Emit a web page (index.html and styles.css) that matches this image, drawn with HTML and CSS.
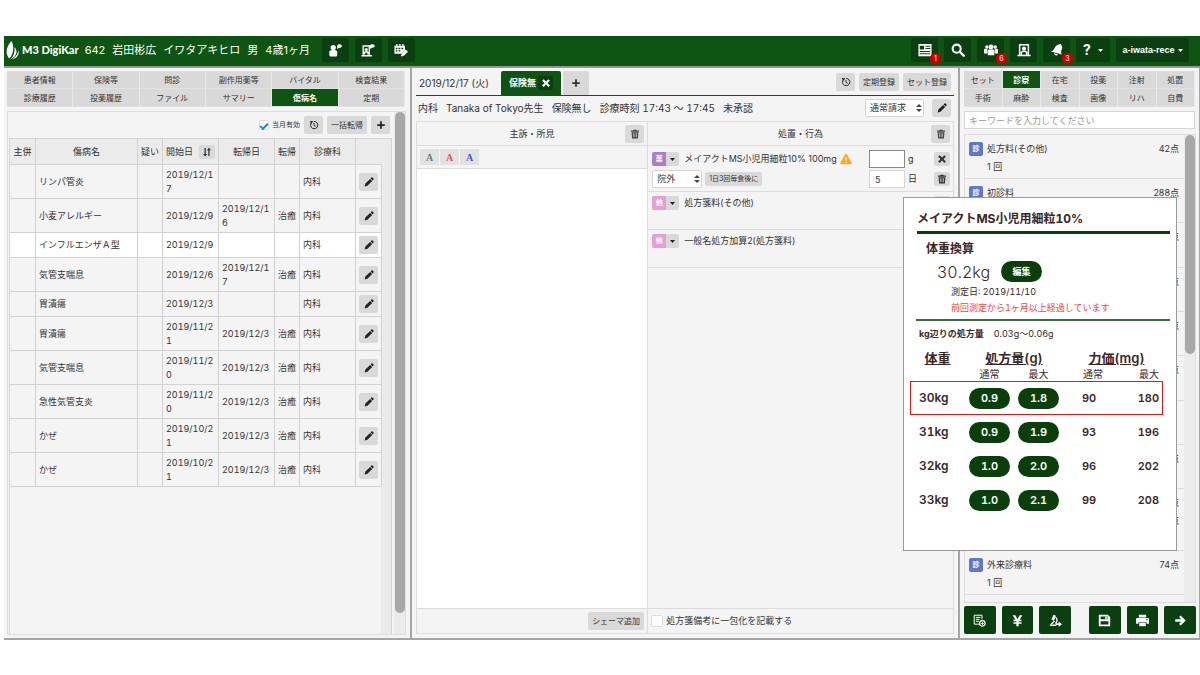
FILE: index.html
```html
<!DOCTYPE html>
<html lang="ja">
<head>
    <meta charset="UTF-8">
    <meta name="viewport" content="width=device-width, initial-scale=1.0">
    <title>M3 DigiKar</title>
    <link rel="stylesheet" href="styles.css">
</head>
<body>
    <svg class="sprite" aria-hidden="true">
        <symbol id="i-pencil" viewBox="0 0 16 16"><path d="M12 .8c.5-.5 1.200-.5 1.700 0l1.500 1.500c.5.5.5 1.200 0 1.700l-1.400 1.400-3.200-3.200zM9.800 3l3.200 3.200-7.500 7.700L1 15l1.200-4.500z"/></symbol>
        <symbol id="i-trash" viewBox="0 0 16 16"><path d="M6 1h4l1 1.5h3.5v2h-13v-2H5z"/><path fill-rule="evenodd" d="M2.5 5.2h11l-.9 9.8H3.4zM5 6.8l.4 6.4h1l-.2-6.4zm2.5 0v6.4h1V6.8zm2.4 0l-.3 6.4h1l.4-6.4z"/></symbol>
        <symbol id="i-plus" viewBox="0 0 16 16"><path d="M6.6 2h2.8v4.6H14v2.8H9.4V14H6.6V9.4H2V6.6h4.6z"/></symbol>
        <symbol id="i-cross" viewBox="0 0 16 16"><path d="M4.2 1.8L8 5.6l3.8-3.8 2.4 2.4L10.4 8l3.8 3.8-2.4 2.4L8 10.4l-3.8 3.8-2.4-2.4L5.6 8 1.8 4.2z"/></symbol>
        <symbol id="i-history" viewBox="0 0 16 16"><path d="M4 4.2A5.8 5.8 0 1 0 8.3 2.3M8 5v3.5l2.6 1.6" fill="none" stroke="currentColor" stroke-width="1.6"/><path d="M1.2 1.6l5.6.3-2.9 4.6z"/></symbol>
        <symbol id="i-sort" viewBox="0 0 16 16"><path d="M4 1.5h2V11h2.4L5 15 1.6 11H4zM10 14.5h2V5h2.4L11 1 7.8 5H10z"/></symbol>
        <symbol id="i-caret" viewBox="0 0 10 6"><path d="M0 0h10L5 6z"/></symbol>
        <symbol id="i-warn" viewBox="0 0 16 16"><path fill-rule="evenodd" d="M8 1c.5 0 .9.3 1.1.7l6.500 11.600c.4.8-.1 1.700-1 1.700H1.400c-.9 0-1.400-.9-1-1.700L6.900 1.700C7.100 1.300 7.500 1 8 1zM7 5.500l.3 4.700h1.400L9 5.500zm.1 5.800v1.800h1.800v-1.800z"/></symbol>
        <symbol id="i-patient" viewBox="0 0 16 16"><circle cx="6" cy="5.200" r="3"/><path d="M1.500 9.500C2.500 8.300 4 8 6 8s3.500.3 4.500 1.500v4.200c0 1-.7 1.800-1.800 1.800H3.300c-1.100 0-1.800-.8-1.800-1.800z"/><path d="M10.500 4.800c-.9-1.700.3-3.500 2.600-3.500 1.700 0 2.700.9 2.700 2s-1 2.100-2.800 2.100l-2.800 1.400z"/></symbol>
        <symbol id="i-reception" viewBox="0 0 16 16"><path d="M2.500 13.500v-10h7v10M.5 14.500h12M4 13v-2c1-1.300 3-1.300 4 0v2" fill="none" stroke="currentColor" stroke-width="1.600"/><circle cx="6" cy="7.500" r="1.800"/><path d="M10 4.800c-.9-1.700.5-3.500 2.800-3.500 1.700 0 2.900.9 2.900 2s-1.200 2-2.900 2L10.500 6.500z"/></symbol>
        <symbol id="i-calendar" viewBox="0 0 16 16"><path fill-rule="evenodd" d="M.5 3h2V1h1.500v2h2V1h1.500v2h2V1H11v2h1.500v5l-4 4.200H.5zM2 5.500V7h2V5.500zm3.200 0V7h2V5.500zm3.300 0V7h2V5.500zM2 8.300v1.500h2V8.300zm3.200 0v1.500h2V8.300z"/><path d="M13.200 7.500L16 10l-4.700 4.700-3.300.6.7-3.200z"/></symbol>
        <symbol id="i-news" viewBox="0 0 16 16"><path fill-rule="evenodd" d="M.5 1h15v14H.5zM2 3v4.500h5V3zm6.500 0v1.200h5.500V3zm0 2.600v1.200h5.500V5.600zM2 9.200v1.100h12V9.200zm0 2.600v1.100h12v-1.100z"/></symbol>
        <symbol id="i-search" viewBox="0 0 16 16"><circle cx="6.500" cy="6.500" r="4.600" fill="none" stroke="currentColor" stroke-width="2.400"/><path d="M10 10l4.500 4.500" stroke="currentColor" stroke-width="2.800" stroke-linecap="round"/></symbol>
        <symbol id="i-group" viewBox="0 0 16 16"><circle cx="3.300" cy="4.500" r="2"/><circle cx="12.700" cy="4.500" r="2"/><circle cx="8" cy="4.600" r="2.800"/><path d="M0 8c0-1 .7-1.500 1.500-1.500h2.300v5.500H0zM16 8c0-1-.7-1.500-1.500-1.500h-2.300v5.500H16zM4.300 9c0-1 .8-1.500 1.700-1.500h4c.9 0 1.700.5 1.700 1.500v5H4.300z"/></symbol>
        <symbol id="i-room" viewBox="0 0 16 16"><path d="M3 13.500V2h10v11.500M.5 14.200h15M5 13.500v-3c1.500-1.500 4.500-1.500 6 0v3" fill="none" stroke="currentColor" stroke-width="1.700"/><circle cx="8" cy="6.500" r="2.400"/></symbol>
        <symbol id="i-bell" viewBox="0 0 16 16"><path d="M11 1.500l1.600-.7.300 1.600c2 3 .6 5-.1 6.600-.4 1.300 0 2.300.7 4L.8 9.700c1.700-.7 2.900-1.200 3.800-2.700C6 4.700 7 2 11 1.500zM4.500 11.800l4.700 1.300c-.8 1.800-4.400 1.300-4.700-1.300z"/></symbol>
        <symbol id="i-note-add" viewBox="0 0 16 16"><path d="M8.500 12.500H1.500V1.500h9.500v5M3.500 4.200h5.500M3.500 6.600h4.500M3.500 9h3.500" fill="none" stroke="currentColor" stroke-width="1.200"/><circle cx="11.500" cy="11.500" r="3.400" fill="none" stroke="currentColor" stroke-width="1.400"/><path d="M9.500 11h4v1h-4zM11 9.500h1v4h-1z"/></symbol>
        <symbol id="i-yen" viewBox="0 0 16 16"><path d="M2 1.500h3.300L8 6.300l2.700-4.800H14L10.600 7H13v1.800H9.400v1.400H13V12H9.400v3H6.600v-3H3v-1.800h3.600V8.800H3V7h2.400z"/></symbol>
        <symbol id="i-scope" viewBox="0 0 16 16"><path d="M5.500.8l3 1.400-2.600 6-3-1.300zM1 13h8v1.800H1z"/><path d="M2.500 12.500L7 8.500M8 4c2.500 2 2.500 5 0 8" fill="none" stroke="currentColor" stroke-width="1.600"/><path d="M8.500 11.300H12V9.200l4 3.300-4 3.300v-2.300H8.500z"/></symbol>
        <symbol id="i-save" viewBox="0 0 16 16"><path fill-rule="evenodd" d="M1 1h11l3 3v11H1zM3.200 3v3.500h8.500V3zm0 6v4h9.600V9z"/><path d="M8.800 3.300h2v2.800h-2z"/></symbol>
        <symbol id="i-print" viewBox="0 0 16 16"><path fill-rule="evenodd" d="M3.500 1h9v3.200h-9zM1.500 5h13c.8 0 1.500.6 1.500 1.500V12h-3v-2H3v2H0V6.500C0 5.600.7 5 1.500 5zm11.300 1.300v1.300h1.500V6.300z"/><path d="M4 10.800h8V15H4z"/></symbol>
        <symbol id="i-arrow" viewBox="0 0 16 16"><path d="M8.200 1.800L14.500 8l-6.300 6.200-2-2 2.600-2.700H1.500v-3h7.300L6.200 3.800z"/></symbol>
    </svg>

    <div class="app">
        <header class="topbar">
            <a href="#" class="logo">
                <svg class="logo-mark" viewBox="0 0 14 19"><path d="M5.500 0c2.600 5 2.600 12-2 17.500C-.8 13.500-.3 6 5.500 0z"/><path d="M8.500 6c3.500 3.500 2.500 9.500-3.800 12.300C8 14.500 9 11 8.500 6z"/><path d="M12.300 9.500c1.500 3.500-1 7.500-6 9 3.500-2.500 5.300-5 6-9z"/></svg>
                <span>M3 DigiKar</span>
            </a>
            <h1 class="patient"><span>642</span><span>岩田彬広</span><span>イワタアキヒロ</span><span>男</span><span>4歳1ヶ月</span></h1>
            <button class="top-btn" aria-label="患者"><svg><use href="#i-patient"/></svg></button>
            <button class="top-btn" aria-label="受付"><svg><use href="#i-reception"/></svg></button>
            <button class="top-btn" aria-label="予約"><svg><use href="#i-calendar"/></svg></button>
            <nav class="top-right">
                <button class="top-btn" aria-label="お知らせ"><svg><use href="#i-news"/></svg><span class="count">1</span></button>
                <button class="top-btn" aria-label="検索"><svg><use href="#i-search"/></svg></button>
                <button class="top-btn" aria-label="グループ"><svg><use href="#i-group"/></svg><span class="count">6</span></button>
                <button class="top-btn" aria-label="診察室"><svg><use href="#i-room"/></svg></button>
                <button class="top-btn" aria-label="通知"><svg><use href="#i-bell"/></svg><span class="count">3</span></button>
                <button class="top-btn help">?<svg class="caret"><use href="#i-caret"/></svg></button>
                <button class="top-btn user">a-iwata-rece<svg class="caret"><use href="#i-caret"/></svg></button>
            </nav>
        </header>

        <main class="panels">
            <section class="panel left">
                <nav class="tabs">
                    <button>患者情報</button><button>保険等</button><button>問診</button><button>副作用薬等</button><button>バイタル</button><button>検査結果</button>
                    <button>診療履歴</button><button>投薬履歴</button><button>ファイル</button><button>サマリー</button><button class="active">傷病名</button><button>定期</button>
                </nav>
                <div class="scroll-box">
                    <div class="disease">
                        <div class="disease-tools">
                            <label class="check small"><input type="checkbox" checked>当月有効</label>
                            <button class="btn icon" aria-label="履歴"><svg><use href="#i-history"/></svg></button>
                            <button class="btn">一括転帰</button>
                            <button class="btn icon" aria-label="追加"><svg><use href="#i-plus"/></svg></button>
                        </div>
                        <div class="disease-list">
                            <div class="disease-body">
                                <table class="disease-table">
                                    <colgroup><col class="c-icon"><col class="c-name"><col class="c-flag"><col class="c-date"><col class="c-date"><col class="c-flag"><col class="c-date"><col class="c-icon"></colgroup>
                                    <thead>
                                        <tr><th>主併</th><th>傷病名</th><th>疑い</th><th><div class="sort">開始日<button class="btn" aria-label="並び替え"><svg><use href="#i-sort"/></svg></button></div></th><th>転帰日</th><th>転帰</th><th>診療科</th><th></th></tr>
                                    </thead>
                                    <tbody>
                                        <tr><td></td><td>リンパ管炎</td><td></td><td>2019/12/17</td><td></td><td></td><td>内科</td><td><button class="btn icon" aria-label="編集"><svg><use href="#i-pencil"/></svg></button></td></tr>
                                        <tr><td></td><td>小麦アレルギー</td><td></td><td>2019/12/9</td><td>2019/12/16</td><td>治癒</td><td>内科</td><td><button class="btn icon" aria-label="編集"><svg><use href="#i-pencil"/></svg></button></td></tr>
                                        <tr class="single current"><td></td><td>インフルエンザＡ型</td><td></td><td>2019/12/9</td><td></td><td></td><td>内科</td><td><button class="btn icon" aria-label="編集"><svg><use href="#i-pencil"/></svg></button></td></tr>
                                        <tr><td></td><td>気管支喘息</td><td></td><td>2019/12/6</td><td>2019/12/17</td><td>治癒</td><td>内科</td><td><button class="btn icon" aria-label="編集"><svg><use href="#i-pencil"/></svg></button></td></tr>
                                        <tr class="single"><td></td><td>胃潰瘍</td><td></td><td>2019/12/3</td><td></td><td></td><td>内科</td><td><button class="btn icon" aria-label="編集"><svg><use href="#i-pencil"/></svg></button></td></tr>
                                        <tr><td></td><td>胃潰瘍</td><td></td><td>2019/11/21</td><td>2019/12/3</td><td>治癒</td><td>内科</td><td><button class="btn icon" aria-label="編集"><svg><use href="#i-pencil"/></svg></button></td></tr>
                                        <tr><td></td><td>気管支喘息</td><td></td><td>2019/11/20</td><td>2019/12/3</td><td>治癒</td><td>内科</td><td><button class="btn icon" aria-label="編集"><svg><use href="#i-pencil"/></svg></button></td></tr>
                                        <tr><td></td><td>急性気管支炎</td><td></td><td>2019/11/20</td><td>2019/12/3</td><td>治癒</td><td>内科</td><td><button class="btn icon" aria-label="編集"><svg><use href="#i-pencil"/></svg></button></td></tr>
                                        <tr><td></td><td>かぜ</td><td></td><td>2019/10/21</td><td>2019/12/3</td><td>治癒</td><td>内科</td><td><button class="btn icon" aria-label="編集"><svg><use href="#i-pencil"/></svg></button></td></tr>
                                        <tr><td></td><td>かぜ</td><td></td><td>2019/10/21</td><td>2019/12/3</td><td>治癒</td><td>内科</td><td><button class="btn icon" aria-label="編集"><svg><use href="#i-pencil"/></svg></button></td></tr>
                                    </tbody>
                                </table>
                            </div>
                        </div>
                    </div>
                    <div class="scrollbar"><div class="thumb thumb-long"></div></div>
                </div>
            </section>

            <section class="panel mid">
                <div class="visit-tabs">
                    <span class="visit-date">2019/12/17 (火)</span>
                    <div class="visit-tab">保険無<button class="close" aria-label="閉じる"><svg><use href="#i-cross"/></svg></button></div>
                    <button class="visit-add" aria-label="追加"><svg><use href="#i-plus"/></svg></button>
                    <div class="visit-actions">
                        <button class="btn icon" aria-label="履歴"><svg><use href="#i-history"/></svg></button>
                        <button class="btn">定期登録</button>
                        <button class="btn">セット登録</button>
                    </div>
                </div>
                <div class="visit-info">
                    <span>内科</span><span>Tanaka of Tokyo先生</span><span>保険無し</span><span>診療時刻 17:43 〜 17:45</span><span>未承認</span>
                    <span class="select claim"><select aria-label="請求区分"><option>通常請求</option></select></span>
                    <button class="btn icon" aria-label="編集"><svg><use href="#i-pencil"/></svg></button>
                </div>
                <div class="karte">
                    <div class="karte-col notes">
                        <div class="karte-head"><h2>主訴・所見</h2><button class="btn icon" aria-label="削除"><svg><use href="#i-trash"/></svg></button></div>
                        <div class="colors"><button>A</button><button class="red">A</button><button class="blue">A</button></div>
                        <textarea aria-label="主訴・所見"></textarea>
                        <div class="karte-foot"><button class="btn">シェーマ追加</button></div>
                    </div>
                    <div class="karte-col acts">
                        <div class="karte-head"><h2>処置・行為</h2><button class="btn icon" aria-label="削除"><svg><use href="#i-trash"/></svg></button></div>
                        <div class="act drug">
                            <div class="act-row">
                                <button class="kind purple"><b>薬</b><span><svg><use href="#i-caret"/></svg></span></button>
                                <span class="act-name">メイアクトMS小児用細粒10% 100mg<svg class="warn"><use href="#i-warn"/></svg></span>
                                <input type="text" class="qty focus" aria-label="用量">
                                <span class="unit">g</span>
                                <button class="btn mini" aria-label="取消"><svg><use href="#i-cross"/></svg></button>
                            </div>
                            <div class="act-row">
                                <span class="select place"><select aria-label="処方区分"><option>院外</option></select></span>
                                <button class="btn usage">1日3回毎食後に</button>
                                <input type="text" class="qty" value="5" aria-label="日数">
                                <span class="unit">日</span>
                                <button class="btn mini" aria-label="削除"><svg><use href="#i-trash"/></svg></button>
                            </div>
                        </div>
                        <div class="act">
                            <div class="act-row">
                                <button class="kind pink"><b>他</b><span><svg><use href="#i-caret"/></svg></span></button>
                                <span class="act-name">処方箋料(その他)</span>
                                <button class="btn mini" aria-label="取消"><svg><use href="#i-cross"/></svg></button>
                            </div>
                        </div>
                        <div class="act">
                            <div class="act-row">
                                <button class="kind pink"><b>他</b><span><svg><use href="#i-caret"/></svg></span></button>
                                <span class="act-name">一般名処方加算2(処方箋料)</span>
                                <button class="btn mini" aria-label="取消"><svg><use href="#i-cross"/></svg></button>
                            </div>
                        </div>
                        <div class="karte-foot"><label class="check"><input type="checkbox">処方箋備考に一包化を記載する</label></div>
                    </div>
                </div>
            </section>

            <section class="panel right">
                <nav class="tabs">
                    <button>セット</button><button class="active">診察</button><button>在宅</button><button>投薬</button><button>注射</button><button>処置</button>
                    <button>手術</button><button>麻酔</button><button>検査</button><button>画像</button><button>リハ</button><button>自費</button>
                </nav>
                <input type="text" class="keyword" placeholder="キーワードを入力してください" aria-label="キーワード">
                <div class="scroll-box fees">
                    <ul class="fee-list">
                        <li><b class="fee-kind">診</b><span>処方料(その他)</span><span class="pt">42点</span><small>1 回</small></li>
                        <li><b class="fee-kind">診</b><span>初診料</span><span class="pt">288点</span></li>
                        <li><span class="pt">点</span></li>
                        <li><span class="pt">点</span></li>
                        <li><span class="pt">点</span></li>
                        <li><span class="pt">点</span></li>
                        <li></li>
                        <li><span class="pt">点</span></li>
                        <li class="tall"><span class="pt">点</span><span class="pt">点</span></li>
                        <li><b class="fee-kind">診</b><span>外来診療料</span><span class="pt">74点</span><small>1 回</small></li>
                        <li></li>
                    </ul>
                    <div class="scrollbar"><div class="thumb thumb-short"></div></div>
                </div>
                <div class="actions">
                    <button aria-label="文書追加"><svg><use href="#i-note-add"/></svg></button>
                    <button aria-label="会計"><svg><use href="#i-yen"/></svg></button>
                    <button aria-label="検査送信"><svg><use href="#i-scope"/></svg></button>
                    <button class="push" aria-label="保存"><svg><use href="#i-save"/></svg></button>
                    <button aria-label="印刷"><svg><use href="#i-print"/></svg></button>
                    <button aria-label="次へ"><svg><use href="#i-arrow"/></svg></button>
                </div>
            </section>
        </main>

        <aside class="dose">
            <h2>メイアクトMS小児用細粒10%</h2>
            <div class="weight">
                <h3>体重換算</h3>
                <div class="weight-now">30.2kg<button>編集</button></div>
                <p>測定日: 2019/11/10</p>
                <p class="alert">前回測定から1ヶ月以上経過しています</p>
            </div>
            <p class="per-kg"><b>kg辺りの処方量</b>0.03g〜0.06g</p>
            <table class="dose-table">
                <colgroup><col class="d-kg"><col class="d-g"><col class="d-g"><col class="d-mg"><col class="d-max"></colgroup>
                <thead>
                    <tr><th>体重</th><th colspan="2">処方量(g)</th><th colspan="2">力価(mg)</th></tr>
                    <tr class="sub"><td></td><td>通常</td><td>最大</td><td>通常</td><td>最大</td></tr>
                </thead>
                <tbody>
                    <tr class="hit"><th>30kg</th><td><button>0.9</button></td><td><button>1.8</button></td><td>90</td><td>180</td></tr>
                    <tr><th>31kg</th><td><button>0.9</button></td><td><button>1.9</button></td><td>93</td><td>196</td></tr>
                    <tr><th>32kg</th><td><button>1.0</button></td><td><button>2.0</button></td><td>96</td><td>202</td></tr>
                    <tr><th>33kg</th><td><button>1.0</button></td><td><button>2.1</button></td><td>99</td><td>208</td></tr>
                </tbody>
            </table>
        </aside>
    </div>
</body>
</html>
```
FILE: styles.css
```css
* {
    box-sizing: border-box;
}
body {
    margin: 0;
    padding: 36px 0 35px 4px;
    background: #fff;
    color: #333;
    font-family: Inter, "Noto Sans CJK JP", sans-serif;
    font-size: 9px;
    line-height: 14px;
}
button, input, select, textarea {
    font: inherit;
    color: inherit;
    margin: 0;
    padding: 0;
    border: none;
    outline: none;
}
button {
    cursor: pointer;
}
h1, h2, h3, p, ul {
    margin: 0;
    padding: 0;
    font-size: inherit;
    font-weight: normal;
}
svg {
    fill: currentColor;
    display: block;
    width: 10px;
    height: 10px;
}
.sprite {
    position: absolute;
    width: 0;
    height: 0;
}
.app {
    position: relative;
    display: flex;
    flex-direction: column;
    height: calc(100vh - 71px);
    min-height: 560px;
    border-bottom: 2px solid #a5a5a5;
}

/* top bar */
.topbar {
    display: flex;
    align-items: center;
    gap: 6px;
    height: 32px;
    padding: 0 11px 2px 2px;
    background: #0e5413;
    border-bottom: 2px solid #8f9a90;
    color: #fff;
}
.logo {
    display: flex;
    align-items: center;
    gap: 2px;
    color: #fff;
    text-decoration: none;
    font-family: Lato, sans-serif;
    font-size: 11px;
    font-weight: 900;
    white-space: nowrap;
}
.logo-mark {
    width: 14px;
    height: 19px;
}
.patient {
    display: flex;
    gap: 7px;
    font-size: 11px;
    white-space: nowrap;
    margin-right: 6px;
}
.top-btn {
    position: relative;
    display: flex;
    align-items: center;
    justify-content: center;
    width: 27px;
    height: 24px;
    border-radius: 2px;
    background: #0a400f;
    color: #fff;
}
.top-btn svg {
    width: 14px;
    height: 14px;
}
.top-btn .caret {
    width: 5px;
    height: 3px;
}
.top-right {
    display: flex;
    gap: 6px;
    margin-left: auto;
}
.help {
    width: 34px;
    gap: 7px;
    font-size: 14px;
    font-weight: bold;
}
.user {
    width: 73px;
    gap: 3px;
    font-family: "Liberation Sans", sans-serif;
    font-weight: bold;
}
.count {
    position: absolute;
    right: -3px;
    bottom: -2px;
    width: 11px;
    height: 11px;
    border-radius: 50%;
    background: #c80000;
    font-size: 7px;
    line-height: 11px;
    text-align: center;
}

/* panels */
.panels {
    flex: 1;
    min-height: 0;
    display: grid;
    grid-template-columns: 408fr 548fr 240fr;
}
.panel {
    display: flex;
    flex-direction: column;
    min-width: 0;
    min-height: 0;
    padding: 3px 4px 3px 3px;
    background: #f4f4f4;
    border-right: 2px solid #a5a5a5;
}
.tabs {
    display: grid;
    grid-template-columns: repeat(6, 1fr);
    margin-right: 1px;
}
.tabs button {
    height: 18px;
    background: #d9d9d9;
    border-right: 1px solid #e8e8e8;
    border-bottom: 1px solid #e2e2e2;
    font-size: 8px;
    line-height: 16px;
    white-space: nowrap;
}
.tabs .active {
    background: #0e5413;
    color: #fff;
    font-weight: bold;
}
.btn {
    display: inline-flex;
    align-items: center;
    justify-content: center;
    height: 18px;
    padding: 0 4px;
    border-radius: 2px;
    background: #d9d9d9;
    font-size: 8px;
    white-space: nowrap;
}
.btn.icon {
    width: 19px;
    padding: 0;
    color: #222;
}
.check {
    display: flex;
    align-items: center;
    gap: 3px;
}
.check input {
    appearance: none;
    width: 12px;
    height: 12px;
    background: #fff;
    border: 1px solid #ddd;
    border-radius: 2px;
}
.check.small {
    font-size: 7px;
}
.check.small input {
    display: grid;
    place-items: center;
    width: 10px;
    height: 10px;
}
.check input:checked::before {
    content: "";
    width: 6px;
    height: 3px;
    border: solid #1a82f0;
    border-width: 0 0 2px 2px;
    transform: rotate(-45deg);
}
.scroll-box {
    flex: 1;
    min-height: 0;
    display: flex;
    margin-top: 4px;
    border: 1px solid #ddd;
}
.scrollbar {
    width: 11px;
    background: #ebebeb;
}
.thumb {
    width: 10px;
    margin: 0 auto;
    border-radius: 5px;
    background: #a8a8a8;
}
.thumb-long {
    height: 96%;
}
.thumb-short {
    height: 47%;
}

/* disease list */
.disease {
    flex: 1;
    min-width: 0;
    display: flex;
    flex-direction: column;
    padding: 0 2px 0 1px;
}
.disease-tools {
    display: flex;
    align-items: center;
    justify-content: flex-end;
    gap: 4px;
    height: 26px;
    padding-right: 2px;
}
.disease-list {
    flex: 1;
    padding-right: 10px;
    background: #ebebeb;
    border: solid #d5d5d5;
    border-width: 1px 1px 0;
}
.disease-body {
    height: 100%;
    background: #f4f4f4;
}
.disease-table {
    width: 100%;
    table-layout: fixed;
    border-collapse: separate;
    border-spacing: 0;
    font-variant-numeric: tabular-nums;
}
.c-icon { width: 26px; }
.c-name { width: 102px; }
.c-flag { width: 25px; }
.c-date { width: 56px; }
.disease-table th, .disease-table td {
    height: 34px;
    padding: 0 0 0 3px;
    border: solid #d2d2d2;
    border-width: 0 1px 1px 0;
    text-align: left;
    word-break: break-all;
}
.disease-table th {
    height: 26px;
    padding: 0;
    background: #ebebeb;
    font-weight: normal;
    text-align: center;
}
.disease-table th:last-child {
    border-right-color: #ebebeb;
}
.disease-table .single td {
    height: 25px;
}
.disease-table .current td {
    background: #fff;
}
.disease-table td .btn {
    display: flex;
}
.sort {
    display: flex;
    align-items: center;
    justify-content: space-between;
    padding: 0 3px;
}
.sort .btn {
    width: 16px;
    height: 14px;
}
.sort svg {
    flex: none;
}

/* karte */
.visit-tabs {
    display: flex;
    align-items: flex-start;
    height: 25px;
    margin-left: 1px;
    padding-left: 3px;
    border-bottom: 1px solid #0e5413;
}
.visit-date {
    width: 82px;
    font-size: 10px;
    line-height: 24px;
    white-space: nowrap;
}
.visit-tab {
    display: flex;
    align-items: center;
    justify-content: space-between;
    width: 60px;
    height: 24px;
    margin-right: 2px;
    padding: 0 8px;
    border-radius: 2px 2px 0 0;
    background: #0e5413;
    color: #fff;
    font-weight: bold;
}
.close {
    display: grid;
    place-items: center;
    width: 15px;
    height: 14px;
    border-radius: 2px;
    background: #0a400f;
}
.visit-add {
    display: grid;
    place-items: center;
    width: 26px;
    height: 24px;
    border-radius: 2px 2px 0 0;
    background: #d9d9d9;
}
.visit-actions {
    display: flex;
    gap: 4px;
    margin-left: auto;
    padding: 2px 3px 0 0;
}
.visit-info {
    display: flex;
    align-items: center;
    gap: 8px;
    height: 24px;
    padding: 0 3px 0 3px;
    font-size: 10px;
    font-variant-numeric: tabular-nums;
    white-space: nowrap;
}
.select {
    position: relative;
    height: 18px;
    border: 1px solid #d5d5d5;
    border-radius: 2px;
    background: #fff;
}
.select select {
    appearance: none;
    display: block;
    width: 100%;
    height: 16px;
    padding: 0 4px;
    background: transparent;
}
.select::before, .select::after {
    content: "";
    position: absolute;
    right: 1px;
    border: 3px solid transparent;
}
.select::before {
    top: 1px;
    border-bottom: 3px solid #444;
}
.select::after {
    bottom: 1px;
    border-top: 3px solid #444;
}
.claim {
    width: 59px;
    margin-left: auto;
    font-size: 9px;
}
.karte {
    flex: 1;
    min-height: 0;
    display: grid;
    grid-template-columns: 232fr 306fr;
    margin: 1px 0 1px 1px;
    border: 1px solid #dcdcdc;
}
.karte-col {
    display: flex;
    flex-direction: column;
    min-width: 0;
}
.notes {
    border-right: 1px solid #dcdcdc;
}
.karte-head {
    display: grid;
    grid-template-columns: 22px 1fr 22px;
    align-items: center;
    height: 24px;
    border-bottom: 1px solid #dcdcdc;
    text-align: center;
}
.karte-head h2 {
    grid-column: 2;
}
.karte-head svg {
    color: #444;
}
.colors {
    display: flex;
    gap: 1px;
    padding: 3px;
    border-bottom: 1px solid #dcdcdc;
}
.colors button {
    width: 19px;
    height: 16px;
    background: #e2e2e2;
    color: #777;
    font: bold 10px "Liberation Serif", serif;
}
.colors .red { color: #e05050; }
.colors .blue { color: #4a55dd; }
.notes textarea {
    flex: 1;
    width: 100%;
    background: #fff;
    resize: none;
}
.karte-foot {
    display: flex;
    align-items: center;
    height: 25px;
    margin-top: auto;
    padding: 0 3px;
    border-top: 1px solid #dcdcdc;
}
.notes .karte-foot {
    justify-content: flex-end;
}
.act {
    height: 38px;
    padding: 1px 3px 0 4px;
    border-bottom: 1px solid #dcdcdc;
}
.act.drug {
    height: 46px;
    padding-top: 3px;
}
.act-row {
    display: flex;
    align-items: center;
    height: 20px;
}
.kind {
    display: flex;
    margin-right: 5px;
    border-radius: 2px;
    overflow: hidden;
    background: #d9d9d9;
    font-size: 7px;
}
.kind b, .kind span {
    display: grid;
    place-items: center;
    width: 14px;
    height: 14px;
    color: #fff;
}
.kind svg {
    width: 5px;
    height: 3px;
    color: #222;
}
.kind span { width: 13px; }
.purple b { background: #a77fcb; }
.pink b { background: #e69fd3; }
.act-name {
    display: flex;
    align-items: center;
    gap: 3px;
    white-space: nowrap;
}
.warn {
    width: 12px;
    height: 12px;
    color: #ffa81c;
}
.qty {
    width: 36px;
    height: 18px;
    margin-left: auto;
    padding: 0 5px;
    background: #fff;
    border: 1px solid #d5d5d5;
}
.qty.focus {
    border-color: #888;
}
.unit {
    width: 29px;
    padding-left: 3px;
}
.act-name + .btn {
    margin-left: auto;
}
.btn.mini {
    width: 16px;
    height: 14px;
    padding: 0;
}
.place {
    width: 50px;
    margin-right: 3px;
}
.btn.usage {
    height: 14px;
    font-size: 7px;
}

/* right panel */
.right {
    padding-left: 4px;
    padding-right: 3px;
    border-right-width: 1px;
}
.keyword {
    height: 18px;
    margin: 4px 1px 0 0;
    padding: 0 4px;
    border: 1px solid #d5d5d5;
    background: #fff;
}
.keyword::placeholder {
    color: #999;
}
.fees {
    margin-top: 5px;
    overflow: hidden;
}
.fee-list {
    flex: 1;
    list-style: none;
}
.fee-list li {
    display: grid;
    grid-template-columns: 14px 1fr auto;
    grid-auto-rows: 18px;
    column-gap: 4px;
    align-items: center;
    height: 44px;
    padding: 5px 5px 0 4px;
    border-bottom: 1px solid #dcdcdc;
}
.fee-list li:nth-child(3n) {
    height: 45px;
}
.fee-list .tall:nth-child(3n) {
    height: 62px;
}
.fee-kind {
    width: 14px;
    height: 14px;
    border-radius: 2px;
    background: #5f78c8;
    color: #fff;
    font-size: 7px;
    text-align: center;
}
.pt {
    grid-column: 3;
}
.fee-list small {
    grid-column: 2;
    font-size: 9px;
}
.actions {
    display: flex;
    gap: 6px;
    margin: 3px 0 1px;
}
.actions button {
    flex: 1;
    display: grid;
    place-items: center;
    height: 28px;
    border-radius: 2px;
    background: #0a400f;
    color: #fff;
}
.actions .push {
    margin-left: 12px;
}
.actions svg {
    width: 13px;
    height: 13px;
}

/* dose popup */
.dose {
    position: absolute;
    top: 161px;
    right: 23px;
    width: 274px;
    height: 354px;
    padding: 11px 6px;
    background: #fff;
    border: 1px solid #999;
    color: #3b2626;
    font-variant-numeric: tabular-nums;
}
.dose h2 {
    margin: 0 0 0 7px;
    padding-bottom: 2px;
    border-bottom: 3px solid #0a400f;
    font-size: 12px;
    font-weight: bold;
    line-height: 20px;
}
.weight {
    margin: 0 0 0 6px;
    padding: 7px 0 3px 10px;
    border-bottom: 2px solid #3c6b3f;
    line-height: 16px;
}
.weight h3 {
    font-size: 12px;
    font-weight: bold;
}
.weight-now {
    display: flex;
    align-items: center;
    gap: 11px;
    padding: 4px 0 2px 11px;
    font-size: 16px;
    font-weight: 300;
}
.dose button {
    width: 41px;
    height: 21px;
    border-radius: 11px;
    background: #0a3f0c;
    color: #fff;
    font-size: 9px;
    font-weight: bold;
}
.weight p {
    padding-left: 25px;
}
.weight .alert {
    color: #ff3b3b;
}
.per-kg {
    padding: 6px 0 8px 9px;
}
.per-kg b {
    margin-right: 10px;
}
.dose-table {
    width: 253px;
    table-layout: fixed;
    border-collapse: separate;
    border-spacing: 0;
    font-size: 11px;
    font-weight: 600;
}
.d-kg { width: 55px; }
.d-g { width: 49px; }
.d-mg { width: 60px; }
.d-max { width: 40px; }
.dose-table th, .dose-table td {
    height: 34px;
    padding: 0;
    text-align: center;
    white-space: nowrap;
}
.dose-table th {
    font-size: 13px;
    font-weight: 600;
}
.dose-table tbody th {
    padding-left: 9px;
    font-size: 12px;
    text-align: left;
}
.dose-table thead th {
    height: 18px;
    text-decoration: underline;
}
.dose-table thead th:last-child {
    padding-left: 7px;
}
.dose-table .sub td {
    height: 14px;
    font-size: 10px;
    font-weight: normal;
}
.dose-table tbody td:nth-child(4) {
    padding-right: 8px;
}
.dose-table td:nth-child(5) {
    padding-right: 4px;
    text-align: right;
}
.dose-table td button {
    font-size: 11px;
    font-weight: 600;
}
.hit {
    outline: 1px solid #f01010;
    outline-offset: -1px;
}
```
